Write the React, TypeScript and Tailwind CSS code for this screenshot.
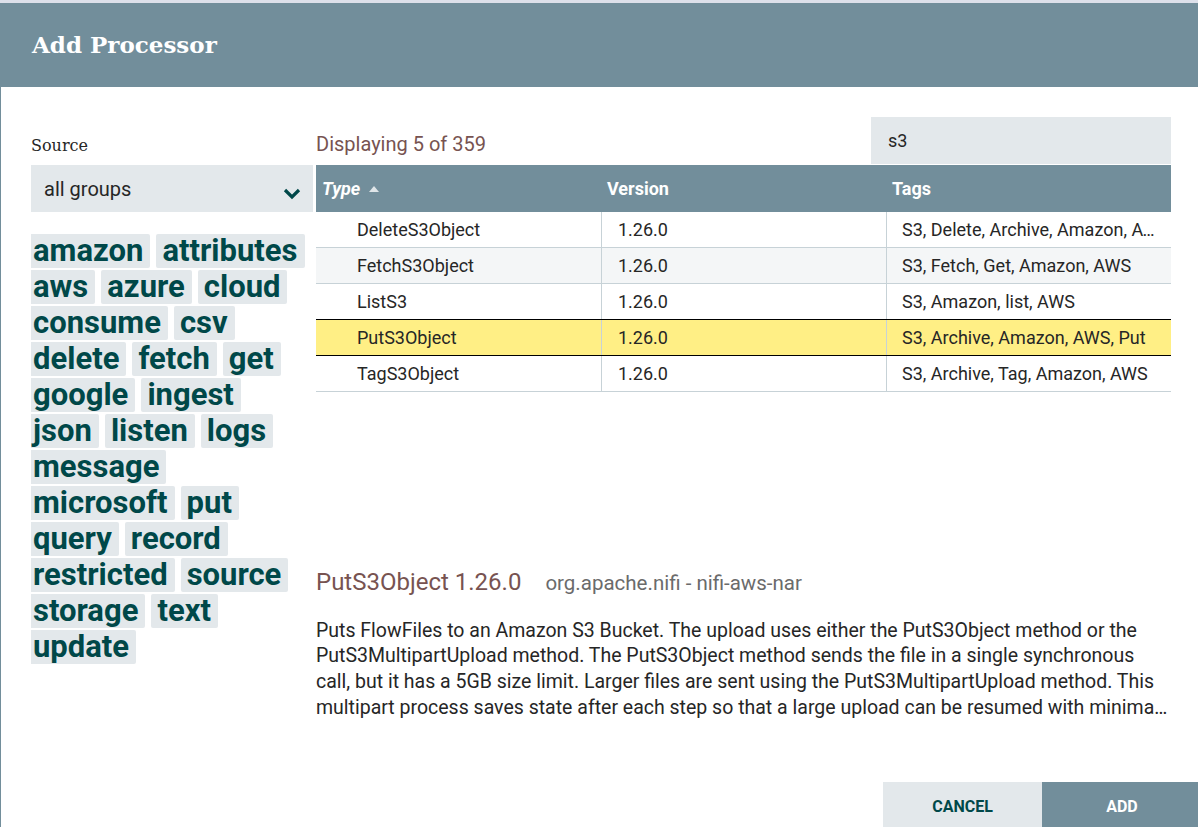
const TAGS = [
  'amazon', 'attributes', 'aws', 'azure', 'cloud', 'consume', 'csv', 'delete', 'fetch', 'get',
  'google', 'ingest', 'json', 'listen', 'logs', 'message', 'microsoft', 'put', 'query', 'record',
  'restricted', 'source', 'storage', 'text', 'update',
]

const ROWS = [
  { type: 'DeleteS3Object', version: '1.26.0', tags: 'S3, Delete, Archive, Amazon, AWS' },
  { type: 'FetchS3Object', version: '1.26.0', tags: 'S3, Fetch, Get, Amazon, AWS' },
  { type: 'ListS3', version: '1.26.0', tags: 'S3, Amazon, list, AWS' },
  { type: 'PutS3Object', version: '1.26.0', tags: 'S3, Archive, Amazon, AWS, Put' },
  { type: 'TagS3Object', version: '1.26.0', tags: 'S3, Archive, Tag, Amazon, AWS' },
]

const SELECTED = 3

export default function App() {
  return (
    <div
      className="w-[1198px] h-[827px] overflow-hidden bg-white border-t-[3px] border-[#dde0ea] flex flex-col text-[#262626]"
      style={{ fontFamily: 'Roboto, "Liberation Sans", sans-serif' }}
    >
      {/* Header */}
      <div className="h-[84px] shrink-0 bg-[#728e9b] flex items-center px-[32px]">
        <h1
          className="text-[23px] font-bold text-white"
          style={{ fontFamily: '"DejaVu Serif", "Liberation Serif", serif' }}
        >
          Add Processor
        </h1>
      </div>

      {/* Body */}
      <div className="flex-1 flex border-l border-[#728e9b] pl-[30px] pt-[30px]">
        {/* Left: source + tag cloud */}
        <div className="w-[282px] shrink-0">
          <div className="h-[48px] flex items-end pb-[9px]">
            <span
              className="text-[16px] leading-[20px] text-[#262626]"
              style={{ fontFamily: '"DejaVu Serif", "Liberation Serif", serif' }}
            >
              Source
            </span>
          </div>
          <div className="h-[47px] bg-[#e3e8eb] flex items-center justify-between pl-[13px] pr-[12px]">
            <span className="text-[20px] text-[#262626]">all groups</span>
            <svg width="18" height="12" viewBox="0 0 18 12" className="mt-[10px]">
              <path d="M2 2 L9 9 L16 2" fill="none" stroke="#004849" strokeWidth="3.2" />
            </svg>
          </div>
          <div className="mt-[22px] overflow-hidden">
            <div className="-ml-[4px] flex flex-wrap gap-x-[6px] gap-y-[2px]">
              {TAGS.map((t) => (
                <span
                  key={t}
                  className="bg-[#e3e8eb] rounded-[2px] pl-[6px] pr-[7px] h-[34px] text-[31px] leading-[34px] font-bold text-[#004849]"
                >
                  {t}
                </span>
              ))}
            </div>
          </div>
        </div>

        {/* Right: table + details */}
        <div className="w-[855px] ml-[3px] flex flex-col">
          <div className="h-[48px] flex items-end justify-between">
            <span className="text-[20px] leading-[24px] pb-[9px] text-[#775351]">Displaying 5 of 359</span>
            <div className="w-[300px] h-[47px] mb-[1px] bg-[#e3e8eb] flex items-center pl-[17px] text-[18px] text-[#262626]">
              s3
            </div>
          </div>

          {/* Table */}
          <div className="grid grid-cols-3 h-[47px] bg-[#728e9b] text-white text-[18px] font-bold items-center">
            <div className="pl-[6px] flex items-center gap-[9px]">
              <span className="italic">Type</span>
              <svg width="10" height="6" viewBox="0 0 10 6">
                <path d="M0 6 L5 0 L10 6 Z" fill="#dfe5e8" />
              </svg>
            </div>
            <div className="pl-[6px]">Version</div>
            <div className="pl-[6px]">Tags</div>
          </div>
          {ROWS.map((r, i) => {
            const sel = i === SELECTED
            const before = i === SELECTED - 1
            return (
              <div
                key={r.type}
                className={`grid grid-cols-3 h-[36px] text-[18px] items-stretch border-b ${
                  sel ? 'bg-[#ffef85] border-black' : before ? 'border-black' : 'border-[#c7d2d7]'
                } ${i === 1 ? 'bg-[#f4f6f7]' : ''}`}
              >
                <div className="pl-[41px] flex items-center">{r.type}</div>
                <div className="pl-[16px] flex items-center border-l border-[#c7d2d7]">{r.version}</div>
                <div className="pl-[15px] pr-[12px] flex items-center border-l border-[#c7d2d7] min-w-0">
                  <span className="truncate">{r.tags}</span>
                </div>
              </div>
            )
          })}

          {/* Details */}
          <div className="mt-[176px] flex items-baseline">
            <span className="text-[24px] leading-[28px] text-[#775351]">PutS3Object 1.26.0</span>
            <span className="ml-[24px] text-[20.5px] text-[#6b6b6b]">org.apache.nifi - nifi-aws-nar</span>
          </div>
          <p className="mt-[19px] text-[19.5px] leading-[25.7px] text-[#262626] line-clamp-4">
            Puts FlowFiles to an Amazon S3 Bucket. The upload uses either the PutS3Object method or the
            PutS3MultipartUpload method. The PutS3Object method sends the file in a single synchronous
            call, but it has a 5GB size limit. Larger files are sent using the PutS3MultipartUpload
            method. This multipart process saves state after each step so that a large upload can be
            resumed with minimal loss if the processor or cluster is stopped and restarted.
          </p>
        </div>
      </div>

      {/* Footer */}
      <div className="h-[45px] shrink-0 flex items-start justify-end border-l border-[#728e9b]">
        <button className="w-[159px] h-[49px] shrink-0 bg-[#e3e8eb] text-[#004849] text-[16px] font-bold uppercase">
          Cancel
        </button>
        <button className="w-[160px] h-[49px] shrink-0 -mr-[4px] bg-[#728e9b] text-white text-[16px] font-bold uppercase">
          Add
        </button>
      </div>
    </div>
  )
}
